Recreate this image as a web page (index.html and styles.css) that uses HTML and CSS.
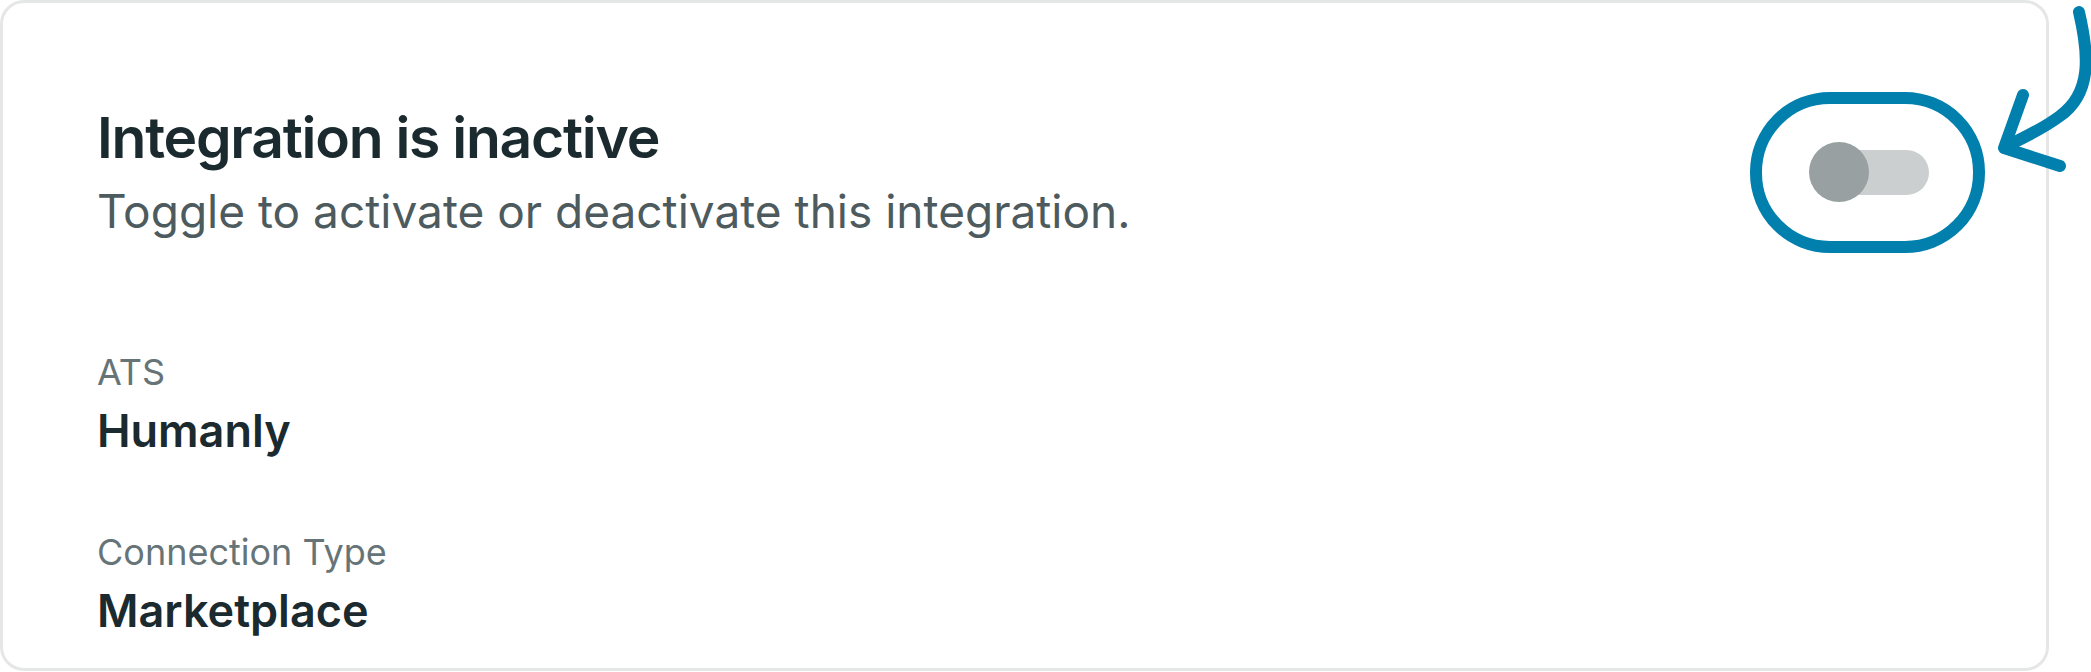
FILE: index.html
```html
<!DOCTYPE html>
<html lang="en">
<head>
<meta charset="utf-8">
<title>Integration status</title>
<link rel="stylesheet" href="styles.css">
</head>
<body>
<div class="page">
  <section class="card">
    <div class="header">
      <div class="header-text">
        <h1 class="title">Integration is inactive</h1>
        <p class="subtitle">Toggle to activate or deactivate this integration.</p>
      </div>
      <div class="toggle-wrap">
        <div class="switch" role="switch" aria-checked="false">
          <span class="track"></span>
          <span class="knob"></span>
        </div>
        <span class="ring"></span>
      </div>
    </div>
    <dl class="details">
      <div class="field field-first">
        <dt class="label">ATS</dt>
        <dd class="value">Humanly</dd>
      </div>
      <div class="field">
        <dt class="label">Connection Type</dt>
        <dd class="value">Marketplace</dd>
      </div>
    </dl>
  </section>
  <svg class="arrow" width="101" height="180" viewBox="1990 0 101 180" aria-hidden="true">
    <path d="M2079 12 C2089 55 2092 93 2060 116 C2040 131 2018 140 2005 147" fill="none" stroke="#017fad" stroke-width="12" stroke-linecap="round" stroke-linejoin="round"/>
    <path d="M2023 95 L2004 148 L2060 166" fill="none" stroke="#017fad" stroke-width="12" stroke-linecap="round" stroke-linejoin="round"/>
  </svg>
</div>
</body>
</html>
```

FILE: styles.css
```css
* { box-sizing: border-box; }

html, body {
  margin: 0;
  padding: 0;
  background: #ffffff;
}

body {
  font-family: Inter, "Noto Sans", "Liberation Sans", sans-serif;
}

.page {
  position: relative;
  width: 2091px;
  height: 672px;
}

.card {
  width: 2049px;
  height: 671px;
  border: 3px solid #e5e7e7;
  border-radius: 24px;
  background: #ffffff;
  padding: 101px 117px 0 94px;
}

.header {
  display: flex;
  align-items: center;
  justify-content: space-between;
}

.title {
  margin: 0;
  font-size: 57px;
  line-height: 68px;
  font-weight: 600;
  color: #1b2a2e;
  letter-spacing: -1.25px;
}

.subtitle {
  margin: 10px 0 0;
  font-size: 46px;
  line-height: 58px;
  font-weight: 400;
  color: #4d5b5e;
}

.toggle-wrap {
  position: relative;
  width: 120px;
  height: 60px;
}

.switch {
  position: relative;
  width: 120px;
  height: 60px;
}

.track {
  position: absolute;
  left: 20px;
  right: 0;
  top: 8px;
  height: 45px;
  border-radius: 23px;
  background: #cbcfcf;
}

.knob {
  position: absolute;
  left: 0;
  top: 0;
  width: 60px;
  height: 60px;
  border-radius: 50%;
  background: #99a0a1;
}

.ring {
  position: absolute;
  top: -50px;
  bottom: -51px;
  left: -59px;
  right: -56px;
  border: 12px solid #017fad;
  border-radius: 80px;
}

.details {
  margin: 110px 0 0;
  display: flex;
  flex-direction: column;
  gap: 71px;
}

.field {
  display: flex;
  flex-direction: column;
  gap: 9px;
}

.label {
  margin: 0;
  font-size: 36px;
  line-height: 44px;
  color: #667477;
}

.value {
  margin: 0;
  font-size: 45px;
  line-height: 56px;
  font-weight: 600;
  color: #1b2a2e;
}

.arrow {
  position: absolute;
  left: 1990px;
  top: 0;
}
```
